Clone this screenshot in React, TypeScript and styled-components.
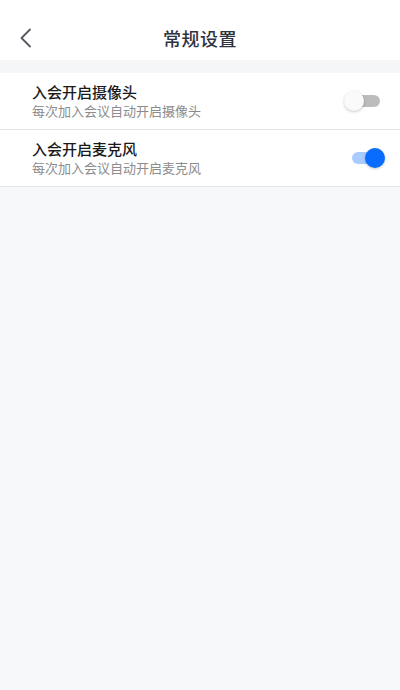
import { useState } from 'react';
import styled, { createGlobalStyle } from 'styled-components';

const GlobalStyle = createGlobalStyle`
  html, body {
    margin: 0;
    padding: 0;
    background: #f7f8fa;
    font-family: "Noto Sans CJK SC", "Noto Sans", sans-serif;
  }
`;

const Page = styled.div`
  min-height: 690px;
  background: #f7f8fa;
`;

const Header = styled.header`
  position: relative;
  height: 60px;
  box-sizing: border-box;
  padding-top: 16px;
  background: #ffffff;
  display: flex;
  align-items: center;
  justify-content: center;
`;

const BackButton = styled.button`
  position: absolute;
  left: 14px;
  top: 24px;
  width: 24px;
  height: 28px;
  padding: 0;
  border: none;
  background: none;
  display: flex;
  align-items: center;
  justify-content: center;
`;

const Title = styled.h1`
  margin: 0;
  font-size: 18px;
  font-weight: 500;
  color: #2e3340;
  line-height: 24px;
  letter-spacing: 0.5px;
`;

const Spacer = styled.div`
  height: 13px;
  background: #f5f6f8;
`;

const List = styled.div`
  background: #ffffff;
`;

const Row = styled.div`
  height: 57px;
  box-sizing: border-box;
  padding: 0 14px 0 32px;
  border-bottom: 1px solid #e4e5e8;
  display: flex;
  align-items: center;
  justify-content: space-between;
`;

const Texts = styled.div`
  display: flex;
  flex-direction: column;
`;

const RowTitle = styled.div`
  font-size: 15px;
  line-height: 20px;
  color: #1a1a1a;
  font-weight: 500;
`;

const RowDesc = styled.div`
  font-size: 13px;
  line-height: 18px;
  color: #8c8c8c;
`;

const SwitchTrack = styled.button<{ $on: boolean }>`
  position: relative;
  width: 28px;
  height: 12px;
  margin-right: 6px;
  padding: 0;
  border: none;
  border-radius: 6px;
  background: ${(p) => (p.$on ? '#a9ccff' : '#bcbcbc')};
  cursor: pointer;
`;

const SwitchThumb = styled.span<{ $on: boolean }>`
  position: absolute;
  top: -4px;
  left: ${(p) => (p.$on ? '13px' : '-8px')};
  width: 20px;
  height: 20px;
  border-radius: 50%;
  background: ${(p) => (p.$on ? '#0a6cff' : '#fafafa')};
  box-shadow: 0 1px 3px rgba(0, 0, 0, 0.22);
  transition: left 0.15s;
`;

const Toggle = ({ on, onChange }: { on: boolean; onChange: () => void }) => (
  <SwitchTrack $on={on} onClick={onChange}>
    <SwitchThumb $on={on} />
  </SwitchTrack>
);

const App = () => {
  const [camera, setCamera] = useState(false);
  const [mic, setMic] = useState(true);

  return (
    <Page>
      <GlobalStyle />
      <Header>
        <BackButton>
          <svg width="14" height="20" viewBox="0 0 14 20">
            <path d="M11 1.5 L2.5 10 L11 18.5" fill="none" stroke="#55585f" strokeWidth="1.8" strokeLinecap="round" strokeLinejoin="round" />
          </svg>
        </BackButton>
        <Title>常规设置</Title>
      </Header>
      <Spacer />
      <List>
        <Row>
          <Texts>
            <RowTitle>入会开启摄像头</RowTitle>
            <RowDesc>每次加入会议自动开启摄像头</RowDesc>
          </Texts>
          <Toggle on={camera} onChange={() => setCamera(!camera)} />
        </Row>
        <Row>
          <Texts>
            <RowTitle>入会开启麦克风</RowTitle>
            <RowDesc>每次加入会议自动开启麦克风</RowDesc>
          </Texts>
          <Toggle on={mic} onChange={() => setMic(!mic)} />
        </Row>
      </List>
    </Page>
  );
};

export default App;
